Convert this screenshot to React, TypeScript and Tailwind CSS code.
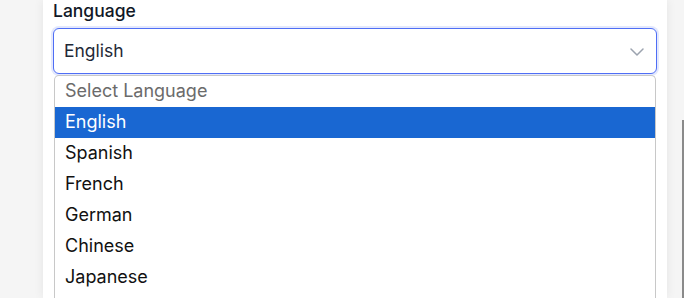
const options = ['English', 'Spanish', 'French', 'German', 'Chinese', 'Japanese'];

const App = () => {
  const selected = 'English';

  return (
    <div className="relative h-[298px] w-[684px] overflow-hidden bg-[#f5f5f5] font-['Inter',sans-serif]">
      <div className="ml-[43px] h-full w-[624px] bg-white px-[10px] shadow-[0_0_10px_rgba(0,0,0,0.07)]">
        <label className="block text-[17.5px] font-medium leading-[22px] text-[#111827]">Language</label>

        {/* Select trigger, focused */}
        <div className="mt-[6px] flex h-[46px] w-[604px] items-center justify-between rounded-[6px] border border-[#4f6ef5] bg-white pl-[10px] pr-[12px] shadow-[0_0_0_2px_rgba(99,128,245,0.18)]">
          <span className="text-[17.5px] text-[#1f2937]">{selected}</span>
          <svg width="14" height="8" viewBox="0 0 14 8" fill="none" className="mt-[2px]">
            <polyline points="1,1 7,7 13,1" stroke="#9ca3af" strokeWidth="1.5" strokeLinecap="round" strokeLinejoin="round" />
          </svg>
        </div>

        {/* Native option list */}
        <div className="ml-px mt-[1px] h-[240px] w-[602px] rounded-t-[5px] border border-b-0 border-[#c8c8c8] bg-white text-[18px] leading-[30px]">
          <div className="h-[31px] pl-[10px] text-[#6b6b6b]">Select Language</div>
          {options.map(o => (
            <div
              key={o}
              className={`h-[31px] pl-[10px] ${o === selected ? 'bg-[#1967d2] text-white' : 'text-[#111111]'}`}
            >
              {o}
            </div>
          ))}
        </div>
      </div>

      {/* scrollbar edge */}
      <div className="absolute right-0 top-[120px] h-[178px] w-[2px] bg-[#8a8a8a]" />
    </div>
  );
};

export default App;
